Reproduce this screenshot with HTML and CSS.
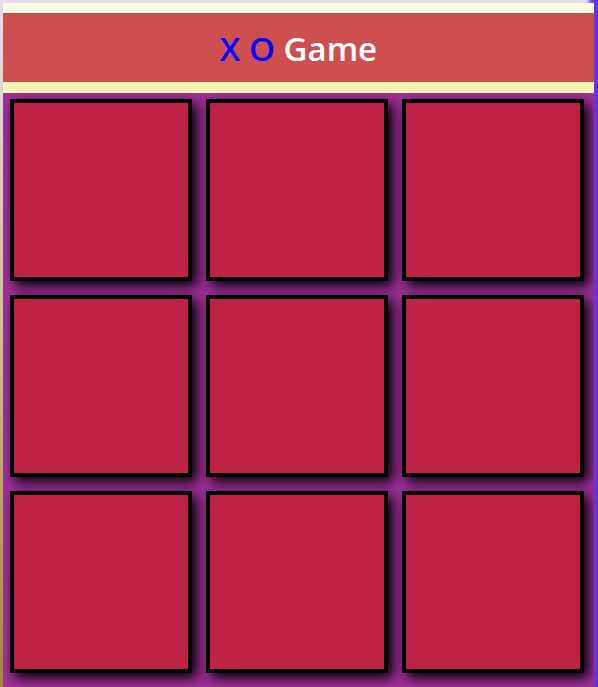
FILE: index.html
```html
<!DOCTYPE html>
<html lang="en">
<head>
<meta charset="utf-8">
<title>X O Game</title>
<link rel="stylesheet" href="styles.css">
</head>
<body>
<header class="header">
  <h1 class="title"><span class="mark">X</span> <span class="mark">O</span> Game</h1>
</header>
<main class="board">
  <div class="cell"></div>
  <div class="cell"></div>
  <div class="cell"></div>
  <div class="cell"></div>
  <div class="cell"></div>
  <div class="cell"></div>
  <div class="cell"></div>
  <div class="cell"></div>
  <div class="cell"></div>
</main>
</body>
</html>
```
FILE: styles.css
```css
html {
  background:
    linear-gradient(to right, rgba(0,0,0,0) 0%, rgba(0,0,0,0) 98%, #6c3ff0 99%, #5a2fd0 100%),
    linear-gradient(to bottom, #e6def0 0%, #cdbf8a 50%, #a08a30 100%);
  min-height: 100%;
}
body {
  margin: 3px 4px 0 3px;
  font-family: "Open Sans", "Noto Sans", sans-serif;
}
.header {
  border-top: 10px solid #ffffe4;
  border-bottom: 11px solid #f9f6b4;
  background: #cf4f50;
}
.title {
  margin: 0;
  height: 69px;
  padding-top: 2px;
  box-sizing: border-box;
  line-height: 67px;
  text-align: center;
  font-size: 33px;
  font-weight: 600;
  color: #ffffff;
}
.mark {
  color: #0000ff;
}
.board {
  display: grid;
  grid-template-columns: repeat(3, 182px);
  grid-auto-rows: 182px;
  gap: 14px;
  padding: 6px 10px 14px 7px;
  background: #a0309a;
}
.cell {
  box-sizing: border-box;
  border: 4px solid #000;
  background: #bd2245;
  box-shadow: 5px 5px 12px #000;
}
```
